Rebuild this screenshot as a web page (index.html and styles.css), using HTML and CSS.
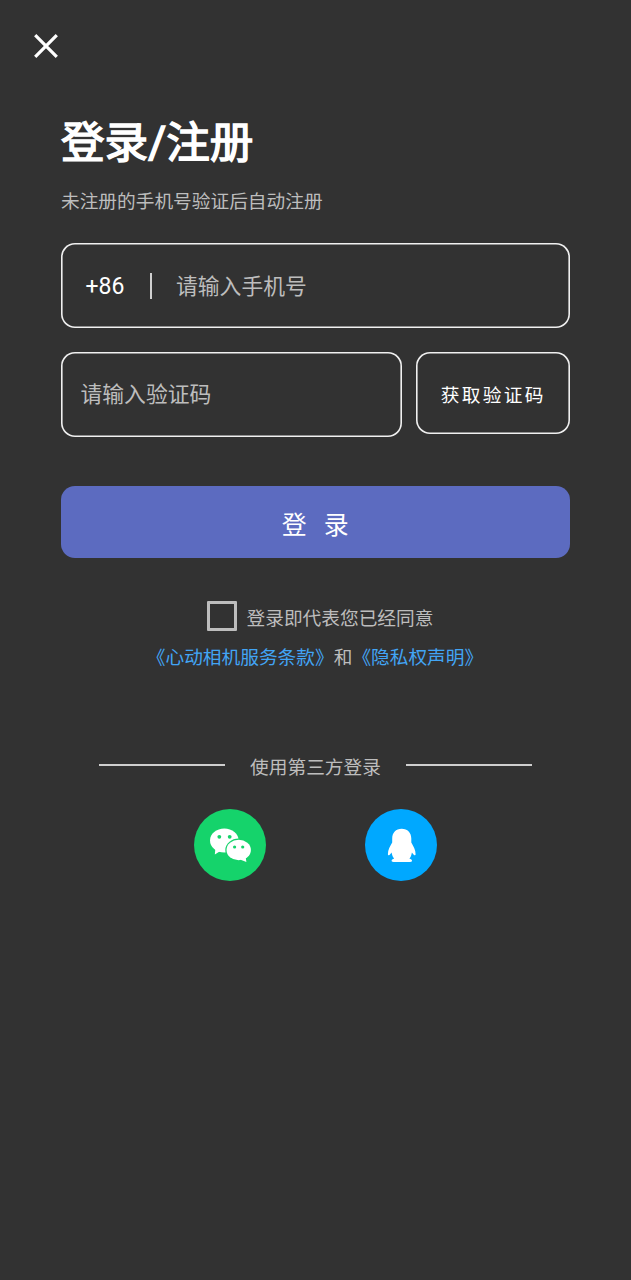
FILE: index.html
```html
<!DOCTYPE html>
<html lang="zh-CN">
<head>
    <meta charset="UTF-8">
    <meta name="viewport" content="width=device-width, initial-scale=1.0">
    <title>登录/注册</title>
    <link rel="stylesheet" href="styles.css">
</head>
<body>
    <header class="top-bar">
        <button class="close-button" aria-label="关闭">
            <svg width="24" height="24" viewBox="0 0 24 24">
                <path d="M1.2 1.2L22.8 22.8M22.8 1.2L1.2 22.8" stroke="#fff" stroke-width="3.2"/>
            </svg>
        </button>
    </header>

    <main class="container">
        <h1>登录/注册</h1>
        <p class="subtitle">未注册的手机号验证后自动注册</p>

        <!-- Login Form -->
        <form class="login-form">
            <div class="field phone-field">
                <span class="country-code">+86</span>
                <span class="divider"></span>
                <input type="tel" placeholder="请输入手机号">
            </div>
            <div class="code-row">
                <div class="field code-field">
                    <input type="text" placeholder="请输入验证码">
                </div>
                <button type="button" class="code-button">获取验证码</button>
            </div>
            <button type="button" class="login-button">登 录</button>
        </form>

        <!-- Agreement -->
        <label class="agreement">
            <input type="checkbox" class="checkbox">
            <span>登录即代表您已经同意</span>
        </label>
        <p class="links"><a href="#">《心动相机服务条款》</a>和<a href="#">《隐私权声明》</a></p>

        <!-- Third Party Login -->
        <div class="third-party">
            <span class="line"></span>
            <span class="third-title">使用第三方登录</span>
            <span class="line"></span>
        </div>
        <div class="social">
            <button class="social-button wechat" aria-label="微信">
                <svg width="72" height="72" viewBox="0 0 72 72">
                    <path d="M21.5 38L20.8 45.6L28 41Z" fill="#fff"/>
                    <ellipse cx="30.3" cy="31.5" rx="14.3" ry="12" fill="#fff"/>
                    <circle cx="25.3" cy="27.8" r="1.9" fill="#15d36b"/>
                    <circle cx="35.7" cy="27.8" r="1.9" fill="#15d36b"/>
                    <ellipse cx="44.7" cy="41" rx="13.4" ry="11.4" fill="#15d36b"/>
                    <path d="M46 50.5L52.4 53L51.5 47Z" fill="#fff"/>
                    <ellipse cx="44.7" cy="41" rx="12.2" ry="10.2" fill="#fff"/>
                    <circle cx="40.6" cy="38" r="1.6" fill="#15d36b"/>
                    <circle cx="48.7" cy="38" r="1.6" fill="#15d36b"/>
                </svg>
            </button>
            <button class="social-button qq" aria-label="QQ">
                <svg width="72" height="72" viewBox="0 0 72 72">
                    <path d="M36.7 19.8C30.8 19.8 27.2 24 27.2 29.5V33.5C25.2 37 22.8 41 22.9 45.2C23 47.2 24.3 46.5 26.6 43.4C27.1 46.3 28 48.3 29.2 49.6C27.5 50.1 26.6 50.9 26.6 51.8C26.6 53 28 53 30 53H43.6C45.8 53 47 53 47 51.8C47 50.9 46.1 50.1 44.4 49.6C45.6 48.3 46.4 46.3 46.9 43.4C49.2 46.5 50.5 47.2 50.6 45.2C50.7 41 48.2 37 46.3 33.5V29.5C46.3 24 42.6 19.8 36.7 19.8Z" fill="#fff"/>
                </svg>
            </button>
        </div>
    </main>
</body>
</html>
```

FILE: styles.css
```css
* {
    box-sizing: border-box;
}
body {
    margin: 0;
    min-height: 1280px;
    background: #323232;
    color: #bdbdbd;
    font-family: Roboto, "Noto Sans CJK SC", sans-serif;
    font-size: 18.7px;
    line-height: 28px;
}
button, input {
    margin: 0;
    padding: 0;
    border: none;
    background: none;
    color: white;
    font-family: inherit;
}
.top-bar {
    display: flex;
    height: 114px;
    padding: 34px 34px 0;
}
.close-button {
    width: 24px;
    height: 24px;
}
.close-button svg, .social-button svg {
    display: block;
}
.container {
    padding: 0 61px;
}
h1 {
    margin: 0;
    color: white;
    font-size: 43.6px;
    font-weight: normal;
    line-height: 60px;
    -webkit-text-stroke: 1.5px white;
}
.subtitle {
    margin: 14px 0 27px;
}
.field, .code-button {
    border-radius: 14px;
    box-shadow: inset 0 0 0 1.6px #f0f0f0;
}
.field {
    display: flex;
    align-items: center;
    height: 85px;
}
.field input {
    flex: 1;
    min-width: 0;
    height: 40px;
    padding-top: 1px;
    font-size: 21.8px;
    outline: none;
}
.field input::placeholder {
    color: #bdbdbd;
}
.phone-field {
    padding: 0 20px 0 24.5px;
}
.country-code {
    width: 64.5px;
    padding-top: 2px;
    color: white;
    font-size: 23px;
}
.divider {
    width: 2px;
    height: 26px;
    margin-right: 24px;
    background: #d0d0d0;
}
.code-row {
    display: flex;
    align-items: flex-start;
    gap: 13.5px;
    margin-top: 23.5px;
}
.code-field {
    width: 341px;
    padding: 0 19.5px;
}
.code-button {
    flex: 1;
    height: 82px;
    padding: 1px 0 0 1px;
    font-size: 18.7px;
    letter-spacing: 2.3px;
}
.login-button {
    display: block;
    width: 100%;
    height: 72px;
    margin-top: 49.5px;
    padding: 2px 0 0 5px;
    border-radius: 14px;
    background: #5c6bc0;
    font-size: 24.9px;
    letter-spacing: 5.5px;
}
.agreement {
    display: flex;
    justify-content: center;
    gap: 10px;
    margin-top: 43px;
    padding-left: 9px;
}
.agreement span {
    padding-top: 4px;
}
.checkbox {
    appearance: none;
    width: 30px;
    height: 30px;
    border: 3px solid #bdbdbd;
    border-radius: 1px;
}
.links {
    margin: 11px 1px 0 0;
    text-align: center;
}
.links a {
    color: #42a5f5;
    text-decoration: none;
}
.third-party {
    display: flex;
    justify-content: center;
    gap: 25px;
    margin-top: 82px;
}
.line {
    width: 126px;
    height: 2px;
    margin-top: 10px;
    background: #cfcfcf;
}
.social {
    display: flex;
    justify-content: center;
    gap: 98.5px;
    margin-top: 27px;
}
.social-button {
    width: 72px;
    height: 72px;
    border-radius: 50%;
}
.wechat {
    background: #15d36b;
}
.qq {
    background: #00a8ff;
}
```
